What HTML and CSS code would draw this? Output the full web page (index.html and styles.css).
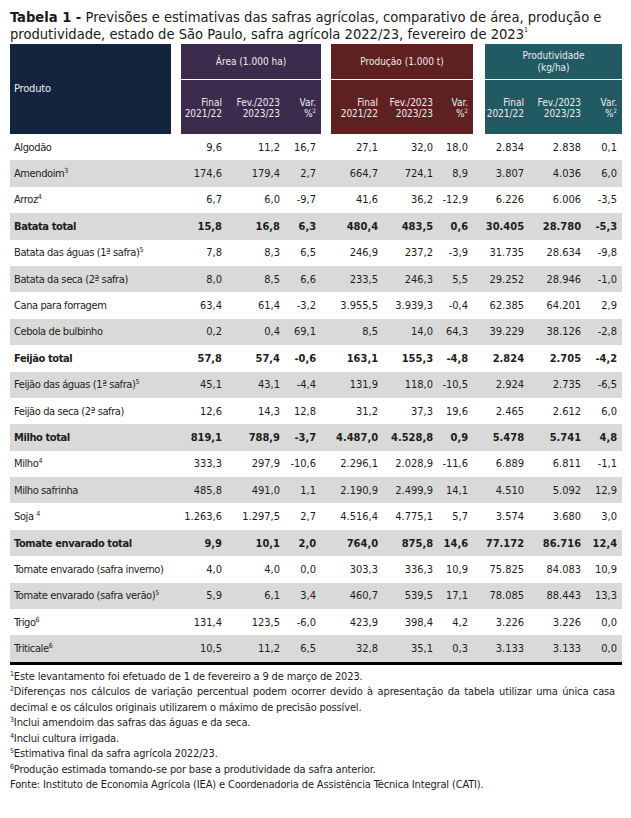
FILE: index.html
```html
<!DOCTYPE html>
<html lang="pt">
<head>
<meta charset="utf-8">
<title>Tabela 1</title>
<link rel="stylesheet" href="styles.css">
</head>
<body>
<h1 class="title"><b>Tabela 1 -</b> Previsões e estimativas das safras agrícolas, comparativo de área, produção e produtividade, estado de São Paulo, safra agrícola 2022/23, fevereiro de 2023<sup>1</sup></h1>
<table class="tbl">
<colgroup>
<col class="c-prod"><col class="c-sp">
<col class="c-a1"><col class="c-a2"><col class="c-a3"><col class="c-sp">
<col class="c-p1"><col class="c-p2"><col class="c-p3"><col class="c-sp2">
<col class="c-q1"><col class="c-q2"><col class="c-q3">
</colgroup>
<thead>
<tr class="h-top">
<th rowspan="2" class="prod navy">Produto</th><th rowspan="2" class="sp"></th>
<th colspan="3" class="grp purple">Área (1.000 ha)</th><th rowspan="2" class="sp"></th>
<th colspan="3" class="grp red">Produção (1.000 t)</th><th rowspan="2" class="sp"></th>
<th colspan="3" class="grp teal">Produtividade<br>(kg/ha)</th>
</tr>
<tr class="h-sub">
<th class="purple">Final<br>2021/22</th><th class="purple">Fev./2023<br>2023/23</th><th class="purple var">Var.<br>%<sup>2</sup></th>
<th class="red">Final<br>2021/22</th><th class="red">Fev./2023<br>2023/23</th><th class="red var">Var.<br>%<sup>2</sup></th>
<th class="teal">Final<br>2021/22</th><th class="teal">Fev./2023<br>2023/23</th><th class="teal var">Var.<br>%<sup>2</sup></th>
</tr>
</thead>
<tbody>
<tr><td class="name">Algodão</td><td></td><td>9,6</td><td>11,2</td><td class="var">16,7</td><td></td><td>27,1</td><td>32,0</td><td class="var">18,0</td><td></td><td>2.834</td><td>2.838</td><td class="var">0,1</td></tr>
<tr class="alt"><td class="name">Amendoim<sup>3</sup></td><td></td><td>174,6</td><td>179,4</td><td class="var">2,7</td><td></td><td>664,7</td><td>724,1</td><td class="var">8,9</td><td></td><td>3.807</td><td>4.036</td><td class="var">6,0</td></tr>
<tr><td class="name">Arroz<sup>4</sup></td><td></td><td>6,7</td><td>6,0</td><td class="var">-9,7</td><td></td><td>41,6</td><td>36,2</td><td class="var">-12,9</td><td></td><td>6.226</td><td>6.006</td><td class="var">-3,5</td></tr>
<tr class="alt bold"><td class="name">Batata total</td><td></td><td>15,8</td><td>16,8</td><td class="var">6,3</td><td></td><td>480,4</td><td>483,5</td><td class="var">0,6</td><td></td><td>30.405</td><td>28.780</td><td class="var">-5,3</td></tr>
<tr><td class="name">Batata das águas (1ª safra)<sup>5</sup></td><td></td><td>7,8</td><td>8,3</td><td class="var">6,5</td><td></td><td>246,9</td><td>237,2</td><td class="var">-3,9</td><td></td><td>31.735</td><td>28.634</td><td class="var">-9,8</td></tr>
<tr class="alt"><td class="name">Batata da seca (2ª safra)</td><td></td><td>8,0</td><td>8,5</td><td class="var">6,6</td><td></td><td>233,5</td><td>246,3</td><td class="var">5,5</td><td></td><td>29.252</td><td>28.946</td><td class="var">-1,0</td></tr>
<tr><td class="name">Cana para forragem</td><td></td><td>63,4</td><td>61,4</td><td class="var">-3,2</td><td></td><td>3.955,5</td><td>3.939,3</td><td class="var">-0,4</td><td></td><td>62.385</td><td>64.201</td><td class="var">2,9</td></tr>
<tr class="alt"><td class="name">Cebola de bulbinho</td><td></td><td>0,2</td><td>0,4</td><td class="var">69,1</td><td></td><td>8,5</td><td>14,0</td><td class="var">64,3</td><td></td><td>39.229</td><td>38.126</td><td class="var">-2,8</td></tr>
<tr class="bold"><td class="name">Feijão total</td><td></td><td>57,8</td><td>57,4</td><td class="var">-0,6</td><td></td><td>163,1</td><td>155,3</td><td class="var">-4,8</td><td></td><td>2.824</td><td>2.705</td><td class="var">-4,2</td></tr>
<tr class="alt"><td class="name">Feijão das águas (1ª safra)<sup>5</sup></td><td></td><td>45,1</td><td>43,1</td><td class="var">-4,4</td><td></td><td>131,9</td><td>118,0</td><td class="var">-10,5</td><td></td><td>2.924</td><td>2.735</td><td class="var">-6,5</td></tr>
<tr><td class="name">Feijão da seca (2ª safra)</td><td></td><td>12,6</td><td>14,3</td><td class="var">12,8</td><td></td><td>31,2</td><td>37,3</td><td class="var">19,6</td><td></td><td>2.465</td><td>2.612</td><td class="var">6,0</td></tr>
<tr class="alt bold"><td class="name">Milho total</td><td></td><td>819,1</td><td>788,9</td><td class="var">-3,7</td><td></td><td>4.487,0</td><td>4.528,8</td><td class="var">0,9</td><td></td><td>5.478</td><td>5.741</td><td class="var">4,8</td></tr>
<tr><td class="name">Milho<sup>4</sup></td><td></td><td>333,3</td><td>297,9</td><td class="var">-10,6</td><td></td><td>2.296,1</td><td>2.028,9</td><td class="var">-11,6</td><td></td><td>6.889</td><td>6.811</td><td class="var">-1,1</td></tr>
<tr class="alt"><td class="name">Milho safrinha</td><td></td><td>485,8</td><td>491,0</td><td class="var">1,1</td><td></td><td>2.190,9</td><td>2.499,9</td><td class="var">14,1</td><td></td><td>4.510</td><td>5.092</td><td class="var">12,9</td></tr>
<tr><td class="name">Soja <sup>4</sup></td><td></td><td>1.263,6</td><td>1.297,5</td><td class="var">2,7</td><td></td><td>4.516,4</td><td>4.775,1</td><td class="var">5,7</td><td></td><td>3.574</td><td>3.680</td><td class="var">3,0</td></tr>
<tr class="alt bold"><td class="name">Tomate envarado total</td><td></td><td>9,9</td><td>10,1</td><td class="var">2,0</td><td></td><td>764,0</td><td>875,8</td><td class="var">14,6</td><td></td><td>77.172</td><td>86.716</td><td class="var">12,4</td></tr>
<tr><td class="name">Tomate envarado (safra inverno)</td><td></td><td>4,0</td><td>4,0</td><td class="var">0,0</td><td></td><td>303,3</td><td>336,3</td><td class="var">10,9</td><td></td><td>75.825</td><td>84.083</td><td class="var">10,9</td></tr>
<tr class="alt"><td class="name">Tomate envarado (safra verão)<sup>5</sup></td><td></td><td>5,9</td><td>6,1</td><td class="var">3,4</td><td></td><td>460,7</td><td>539,5</td><td class="var">17,1</td><td></td><td>78.085</td><td>88.443</td><td class="var">13,3</td></tr>
<tr><td class="name">Trigo<sup>6</sup></td><td></td><td>131,4</td><td>123,5</td><td class="var">-6,0</td><td></td><td>423,9</td><td>398,4</td><td class="var">4,2</td><td></td><td>3.226</td><td>3.226</td><td class="var">0,0</td></tr>
<tr class="alt last"><td class="name">Triticale<sup>6</sup></td><td></td><td>10,5</td><td>11,2</td><td class="var">6,5</td><td></td><td>32,8</td><td>35,1</td><td class="var">0,3</td><td></td><td>3.133</td><td>3.133</td><td class="var">0,0</td></tr>
</tbody>
</table>
<div class="notes">
<p><sup>1</sup>Este levantamento foi efetuado de 1 de fevereiro a 9 de março de 2023.</p>
<p class="just"><sup>2</sup>Diferenças nos cálculos de variação percentual podem ocorrer devido à apresentação da tabela utilizar uma única casa decimal e os cálculos originais utilizarem o máximo de precisão possível.</p>
<p><sup>3</sup>Inclui amendoim das safras das águas e da seca.</p>
<p><sup>4</sup>Inclui cultura irrigada.</p>
<p><sup>5</sup>Estimativa final da safra agrícola 2022/23.</p>
<p><sup>6</sup>Produção estimada tomando-se por base a produtividade da safra anterior.</p>
<p>Fonte: Instituto de Economia Agrícola (IEA) e Coordenadoria de Assistência Técnica Integral (CATI).</p>
</div>
</body>
</html>
```
FILE: styles.css
```css
html, body { background: #ffffff; }
body {
  margin: 0;
  padding: 9px 9px 0 10px;
  font-family: "DejaVu Sans Condensed", "DejaVu Sans", sans-serif;
  color: #1c1c1c;
}
.title {
  font-size: 14.6px;
  font-weight: normal;
  line-height: 16.5px;
  margin: 0 0 2px;
  color: #1a1a1a;
}
.title b { font-weight: bold; }
.title sup { font-size: 7px; vertical-align: 7px; line-height: 0; }

.tbl {
  border-collapse: collapse;
  border-spacing: 0;
  table-layout: fixed;
  width: 612px;
  font-size: 11px;
}
.c-prod { width: 161px; }
.c-sp { width: 10px; }
.c-sp2 { width: 12px; }
.c-a1 { width: 41px; }
.c-a2 { width: 58px; }
.c-a3 { width: 41px; }
.c-p1 { width: 47px; }
.c-p2 { width: 55px; }
.c-p3 { width: 40px; }
.c-q1 { width: 39px; }
.c-q2 { width: 57px; }
.c-q3 { width: 41px; }

.tbl th {
  color: #ececec;
  font-weight: normal;
  font-size: 10px;
  line-height: 11.5px;
  padding: 0;
}
.navy { background: #13243f; }
.purple { background: #3c2b4c; }
.red { background: #5f2022; }
.teal { background: #225a64; }
.sp { background: #ffffff; }

.h-top th { height: 35px; }
.h-top .grp { border-bottom: 1px solid #ffffff; text-align: center; }
.h-top .prod { text-align: left; padding-left: 4px; font-size: 11px; vertical-align: middle; letter-spacing: -0.2px; }
.h-sub th { height: 52px; text-align: right; padding-right: 0; vertical-align: middle; padding-top: 2px; }
.h-sub th.var { padding-right: 5px; }
.tbl th sup { font-size: 6px; vertical-align: 4px; line-height: 0; }

.tbl td {
  height: 26.4px;
  padding: 0;
  text-align: right;
  vertical-align: middle;
  white-space: nowrap;
  line-height: 13px;
}
.tbl td.var { padding-right: 5px; }
.tbl td.name { text-align: left; padding-left: 4px; letter-spacing: -0.4px; }
.tbl td sup { font-size: 7px; vertical-align: 4px; line-height: 0; letter-spacing: 0; }
.tbl tr.alt td { background: #d9d9d9; }
.tbl tr.bold td { font-weight: bold; }
.tbl tr.last td { border-bottom: 3px solid #000000; }

.notes {
  margin-top: 4px;
  width: 605px;
  font-size: 11px;
  line-height: 15.5px;
  letter-spacing: -0.15px;
  color: #1c1c1c;
}
.notes p { margin: 0; }
.notes p.just { text-align: justify; }
.notes sup { font-size: 7px; vertical-align: 4px; line-height: 0; }
```
